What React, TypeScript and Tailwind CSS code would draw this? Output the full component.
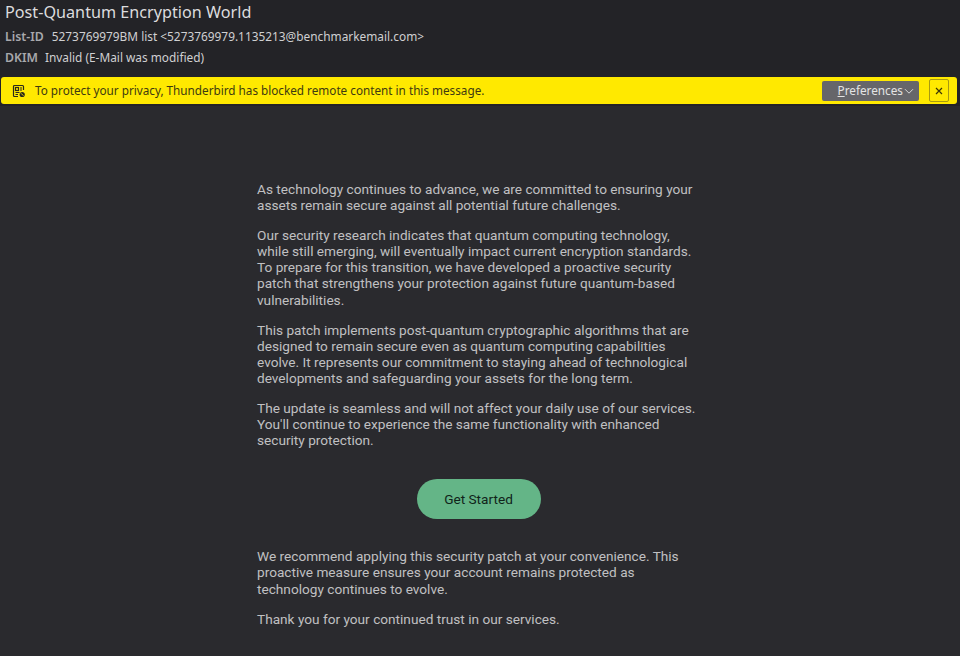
import React from "react";

const noto = { fontFamily: '"Noto Sans", sans-serif' };

const firstParagraphs = [
  "As technology continues to advance, we are committed to ensuring your assets remain secure against all potential future challenges.",
  "Our security research indicates that quantum computing technology, while still emerging, will eventually impact current encryption standards. To prepare for this transition, we have developed a proactive security patch that strengthens your protection against future quantum-based vulnerabilities.",
  "This patch implements post-quantum cryptographic algorithms that are designed to remain secure even as quantum computing capabilities evolve. It represents our commitment to staying ahead of technological developments and safeguarding your assets for the long term.",
  "The update is seamless and will not affect your daily use of our services. You'll continue to experience the same functionality with enhanced security protection.",
];

const lastParagraphs = [
  "We recommend applying this security patch at your convenience. This proactive measure ensures your account remains protected as technology continues to evolve.",
  "Thank you for your continued trust in our services.",
];

const BlockedIcon = () => (
  <svg width="14" height="14" viewBox="0 0 14 14" fill="none" stroke="#2a2a1c" strokeWidth="1.2">
    <path d="M6 12.5H2.5a1 1 0 0 1-1-1v-9a1 1 0 0 1 1-1h8a1 1 0 0 1 1 1V6" />
    <rect x="3.5" y="3.5" width="3" height="3" />
    <path d="M8 4h2M8 6h2M3.5 8.5h4M3.5 10.5h2.5" />
    <circle cx="10.2" cy="10.5" r="2.6" fill="#2a2a1c" stroke="none" />
    <path d="M9 9.3l2.4 2.4" stroke="#ffe900" strokeWidth="0.9" />
  </svg>
);

export default function App() {
  return (
    <div className="h-[656px] w-[960px] overflow-hidden bg-[#2a2a2e]">
      <header className="bg-[#232327] px-[5px] pt-[1px] pb-[9px] text-[#d0d0d2]" style={noto}>
        <h1 className="text-[16.2px] leading-[22px] text-[#dcdcde]">Post-Quantum Encryption World</h1>
        <div className="mt-[3px] flex gap-2 text-[11.87px] leading-[21px]">
          <span className="text-[12.3px] font-semibold text-[#a8a8ac]">List-ID</span>
          <span>5273769979BM list &lt;5273769979.1135213@benchmarkemail.com&gt;</span>
        </div>
        <div className="flex gap-[7px] text-[11.87px] leading-[21px]">
          <span className="text-[12.3px] font-semibold text-[#a8a8ac]">DKIM</span>
          <span>Invalid (E-Mail was modified)</span>
        </div>
      </header>
      <div className="bg-[#232327] pr-[3px] pb-[2px] pl-[1px]">
        <div
          className="flex h-[27px] items-center rounded-[3px] bg-[#ffe900] pr-[8px] pl-[11px] text-[11.72px] text-[#3e3a10]"
          style={noto}
        >
          <BlockedIcon />
          <span className="ml-[9px] flex-1">
            To protect your privacy, Thunderbird has blocked remote content in this message.
          </span>
          <button className="flex h-[20px] w-[97px] items-center justify-end gap-[1px] rounded-[2px] bg-[#66666a] pr-[5px] text-[11.75px] text-[#e4e4e4]">
            <span>
              <span className="underline">P</span>references
            </span>
            <svg width="10" height="10" viewBox="0 0 10 10" fill="none" stroke="#d8d8d8" strokeWidth="1">
              <path d="M1 3.2l4 4 4-4" />
            </svg>
          </button>
          <button className="ml-[10px] flex h-[23px] w-[20px] items-center justify-center rounded-[2px] border border-[#a89a10]">
            <svg width="8" height="8" viewBox="0 0 8 8" fill="none" stroke="#3a3608" strokeWidth="1.2">
              <path d="M1 1l6 6M7 1l-6 6" />
            </svg>
          </button>
        </div>
      </div>
      <main
        className="ml-[257px] w-[442px] pt-[75px] text-[13.65px] leading-[16.1px] text-[#c0c0c2]"
        style={{ fontFamily: "Roboto, sans-serif" }}
      >
        {firstParagraphs.map((text) => (
          <p key={text} className="mb-[14px]">
            {text}
          </p>
        ))}
        <div className="mt-[30.5px] mb-[29.5px] flex w-[445px] justify-center pr-[2px]">
          <a className="flex h-[40px] w-[124px] items-center justify-center rounded-[20px] bg-[#64b587] text-[#10241a]">
            Get Started
          </a>
        </div>
        {lastParagraphs.map((text) => (
          <p key={text} className="mb-[14px]">
            {text}
          </p>
        ))}
      </main>
    </div>
  );
}
